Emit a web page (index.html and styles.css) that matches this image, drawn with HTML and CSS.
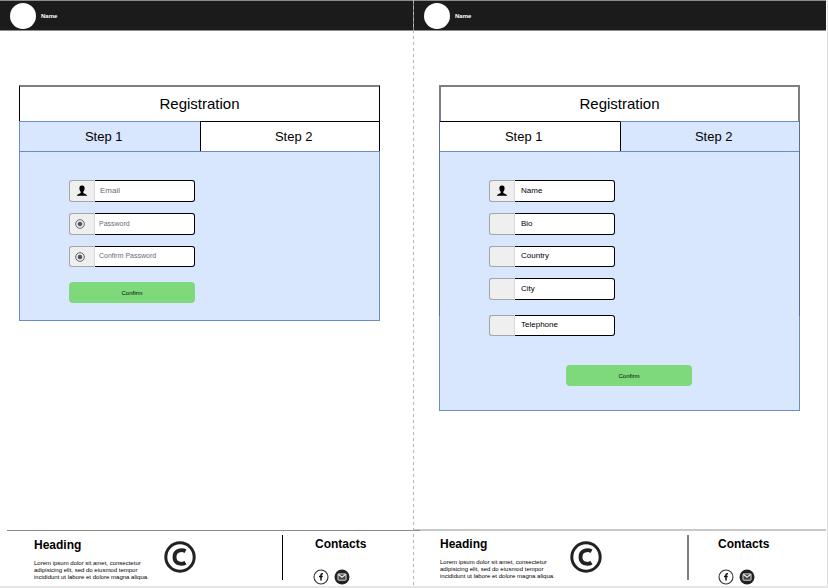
FILE: index.html
```html
<!DOCTYPE html>
<html lang="en">
<head>
<meta charset="utf-8">
<title>Registration</title>
<link rel="stylesheet" href="styles.css">
</head>
<body>
<svg class="defs" width="0" height="0" aria-hidden="true">
  <symbol id="user" viewBox="0 0 12 12">
    <path d="M6 .6C7.9.6 8.700 1.800 8.600 3.400 8.500 4.900 8 6 7.300 6.600V8C8 8.900 10.800 9 11.300 10.800H.7C1.200 9 4 8.900 4.700 8V6.600C4 6 3.500 4.900 3.400 3.400 3.300 1.800 4.100.6 6 .6Z"/>
  </symbol>
  <symbol id="dot" viewBox="0 0 10 10">
    <circle cx="5" cy="5" r="4.300" fill="none" stroke="#555" stroke-width=".9"/>
    <circle cx="5" cy="5" r="2.300" fill="#555"/>
  </symbol>
  <symbol id="copyright" viewBox="0 0 32 32">
    <circle cx="16" cy="16" r="14.200" fill="none" stroke="#222" stroke-width="3"/>
    <path d="M21.500 10.200C18.500 8.500 10.500 8.200 10.500 16s8 7.500 11 5.800" fill="none" stroke="#222" stroke-width="3.900"/>
  </symbol>
  <symbol id="facebook" viewBox="0 0 16 16">
    <circle cx="8" cy="8" r="7" fill="#fff" stroke="#333" stroke-width="1.100"/>
    <path d="M9.900 4.800H9.200Q8 4.800 8 6V11.600M6 7.600H9.700" fill="none" stroke="#111" stroke-width="1.500"/>
  </symbol>
  <symbol id="mail" viewBox="0 0 16 16">
    <circle cx="8" cy="8" r="7.500" fill="#222"/>
    <rect x="4" y="4.900" width="8" height="6.300" rx=".6" fill="#444" stroke="#ddd"/>
    <path d="M4.200 5.200 8 8.300 11.800 5.200" fill="none" stroke="#eee" stroke-width="1.100"/>
  </symbol>
</svg>
<div class="board">
  <section class="page page-one">
    <header class="bar"><span class="avatar"></span><span class="user">Name</span></header>
    <main class="main">
      <div class="card">
        <h1 class="title">Registration</h1>
        <div class="tabs">
          <button class="tab tab-first active" type="button">Step 1</button>
          <button class="tab tab-last" type="button">Step 2</button>
        </div>
        <form class="form">
          <div class="field">
            <label class="icon" for="email" aria-label="Email"><svg class="i-user"><use href="#user"/></svg></label>
            <input class="input" id="email" type="email" placeholder="Email">
          </div>
          <div class="field">
            <label class="icon icon-start" for="password" aria-label="Password"><svg class="i-dot"><use href="#dot"/></svg></label>
            <input class="input small" id="password" type="password" placeholder="Password">
          </div>
          <div class="field field-short">
            <label class="icon icon-start" for="confirm" aria-label="Confirm Password"><svg class="i-dot"><use href="#dot"/></svg></label>
            <input class="input small" id="confirm" type="password" placeholder="Confirm Password">
          </div>
          <button class="submit" type="button">Confirm</button>
        </form>
      </div>
    </main>
    <footer class="footer">
      <div class="about">
        <h2 class="heading">Heading</h2>
        <p class="text">Lorem ipsum dolor sit amet, consectetur adipisicing elit, sed do eiusmod tempor incididunt ut labore et dolore magna aliqua.</p>
      </div>
      <svg class="copyright"><use href="#copyright"/></svg>
      <div class="contacts">
        <h2 class="heading">Contacts</h2>
        <div class="social">
          <a href="#" aria-label="Facebook"><svg class="i-social"><use href="#facebook"/></svg></a>
          <a href="#" aria-label="Mail"><svg class="i-social"><use href="#mail"/></svg></a>
        </div>
      </div>
    </footer>
  </section>

  <section class="page page-two">
    <header class="bar"><span class="avatar"></span><span class="user">Name</span></header>
    <main class="main">
      <div class="card">
        <h1 class="title">Registration</h1>
        <div class="tabs">
          <button class="tab tab-first" type="button">Step 1</button>
          <button class="tab tab-last active" type="button">Step 2</button>
        </div>
        <form class="form">
          <div class="field">
            <label class="icon" for="name" aria-label="Name"><svg class="i-user"><use href="#user"/></svg></label>
            <input class="input" id="name" type="text" placeholder="Name">
          </div>
          <div class="field">
            <label class="icon" for="bio" aria-label="Bio"></label>
            <input class="input" id="bio" type="text" placeholder="Bio">
          </div>
          <div class="field field-short">
            <label class="icon" for="country" aria-label="Country"></label>
            <input class="input" id="country" type="text" placeholder="Country">
          </div>
          <div class="field">
            <label class="icon" for="city" aria-label="City"></label>
            <input class="input" id="city" type="text" placeholder="City">
          </div>
          <div class="field field-short field-phone">
            <label class="icon" for="phone" aria-label="Telephone"></label>
            <input class="input" id="phone" type="tel" placeholder="Telephone">
          </div>
          <button class="submit" type="button">Confirm</button>
        </form>
      </div>
    </main>
    <footer class="footer">
      <div class="about">
        <h2 class="heading">Heading</h2>
        <p class="text">Lorem ipsum dolor sit amet, consectetur adipisicing elit, sed do eiusmod tempor incididunt ut labore et dolore magna aliqua.</p>
      </div>
      <svg class="copyright"><use href="#copyright"/></svg>
      <div class="contacts">
        <h2 class="heading">Contacts</h2>
        <div class="social">
          <a href="#" aria-label="Facebook"><svg class="i-social"><use href="#facebook"/></svg></a>
          <a href="#" aria-label="Mail"><svg class="i-social"><use href="#mail"/></svg></a>
        </div>
      </div>
    </footer>
  </section>
</div>
</body>
</html>
```
FILE: styles.css
```css
* { box-sizing: border-box; }

body {
  margin: 0;
  background: #fff;
  color: #000;
  font-family: "Liberation Sans", Arial, sans-serif;
}

button, input { font-family: inherit; color: inherit; }
h1, h2, p { margin: 0; }
svg { display: block; }
.defs { position: absolute; }

.board {
  display: grid;
  grid-template-columns: 1fr 1fr;
  min-height: 100vh;
  padding-right: 1px;
  border-right: 1px solid #e0e0e0;
  border-bottom: 2px solid #e5e5e5;
}

.page {
  position: relative;
  display: flex;
  flex-direction: column;
}
.page-one { z-index: 1; }

/* dashed page break between the two sheets */
.page-two::before {
  content: "";
  position: absolute;
  z-index: 1;
  top: 0;
  bottom: 0;
  left: 0;
  width: 1px;
  background: repeating-linear-gradient(#b4b4b4 0 3px, transparent 3px 6px);
}

.bar {
  display: flex;
  align-items: center;
  gap: 5px;
  height: 31px;
  padding-left: 10px;
  background: #1b1b1b;
  border-top: 1px solid #8d8d8d;
  border-bottom: 1px solid #8d8d8d;
}
.page-two .bar { border-left: 1px solid #8d8d8d; }

.avatar {
  width: 26px;
  height: 26px;
  border-radius: 50%;
  background: #fff;
}

.user {
  color: #fff;
  font-size: 6px;
  font-weight: bold;
}

.main {
  flex: 1;
  padding: 54px 33px 54px 19px;
}
.page-two .main { padding: 54px 26px 54px 26px; }

.card { position: relative; }

/* outline of the shorter sheet behind the second form */
.page-two .card::after {
  content: "";
  position: absolute;
  top: 36px;
  left: 0;
  right: 0;
  height: 195px;
  border: solid #5b6f93;
  border-width: 0 1px;
  pointer-events: none;
}

.title {
  height: 36px;
  border: 1px solid #000;
  border-top: 2px solid #7f7f7f;
  border-bottom: 0;
  font-size: 15px;
  font-weight: normal;
  line-height: 34px;
  text-align: center;
}
.page-two .title {
  border-left: 2px solid #7f7f7f;
  border-right: 2px solid #7f7f7f;
}

.tabs {
  display: grid;
  grid-template-columns: 1fr 1fr;
}

.tab {
  height: 30px;
  border: 1px solid #000;
  border-bottom: 0;
  border-radius: 0;
  background: #fff;
  font-size: 13px;
}
.tab-first { padding: 0 12px 0 0; border-right: 0; }
.tab-last { padding: 0 0 0 8px; }
.tab.active { background: #d8e6fe; border-color: #6b8cc4; }
.tab-last.active { border-left-color: #000; }

.form {
  display: flex;
  flex-direction: column;
  align-items: flex-start;
  gap: 11px;
  padding: 28px 49px 17px;
  background: #d8e6fe;
  border: 1px solid #6b8cc4;
}
.page-two .form { padding-bottom: 24px; }

.field {
  display: flex;
  width: 126px;
  height: 22px;
}
.field-short { height: 21px; }
.field-phone { margin-top: 4px; }

.icon {
  display: flex;
  align-items: center;
  justify-content: center;
  width: 26px;
  background: #efefef;
  border: 1px solid #a3a6ad;
  border-right-color: #d8d8d8;
  border-radius: 3px 0 0 3px;
}
.icon-start { justify-content: flex-start; padding-left: 5px; }
.i-user { width: 12px; height: 12px; }
.i-dot { width: 10px; height: 10px; }

.input {
  flex: 1;
  min-width: 0;
  padding: 0 5px 1px;
  background: #fff;
  border: 1px solid #000;
  border-left: 0;
  border-radius: 0 3px 3px 0;
  font-size: 8px;
}
.field-short .input { padding-bottom: 2px; }
.input::placeholder { color: #6c6c6c; opacity: 1; }
.page-two .input { padding-left: 6px; }
.page-two .input::placeholder { color: #000; }
.input.small { padding-left: 4px; font-size: 7px; }

.submit {
  width: 126px;
  height: 21px;
  margin-top: 4px;
  padding: 0;
  background: #7ed97a;
  border: 0;
  border-radius: 4px;
  font-size: 6px;
}
.page-two .submit { margin: 18px 0 0 77px; }

.footer {
  display: grid;
  grid-template-columns: 130px 32px 1fr;
  margin: 0 -7px 0 7px;
  padding: 4px 0 5px 27px;
  border-top: 1px solid #8d8d8d;
}
.page-two .footer {
  margin: 0;
  padding-right: 1px;
  padding-bottom: 6px;
  border-top: 2px solid #c8c8c8;
}

.about { padding-top: 3px; }
.page-two .about { padding-top: 2px; }
.heading { font-size: 12px; line-height: 14px; }
.text {
  width: 120px;
  margin-top: 8px;
  font-size: 6px;
  line-height: 7px;
}

.copyright { width: 32px; height: 32px; margin-top: 6px; }

.contacts {
  justify-self: end;
  width: 138px;
  height: 45px;
  padding: 2px 0 0 32px;
  border-left: 1px solid #000;
}
.page-two .contacts { padding-left: 29px; border-left: 2px solid #7f7f7f; }

.social {
  display: flex;
  gap: 5px;
  margin-top: 18px;
}
.page-one .social { margin-left: -2px; }
.i-social { width: 16px; height: 16px; }
```
